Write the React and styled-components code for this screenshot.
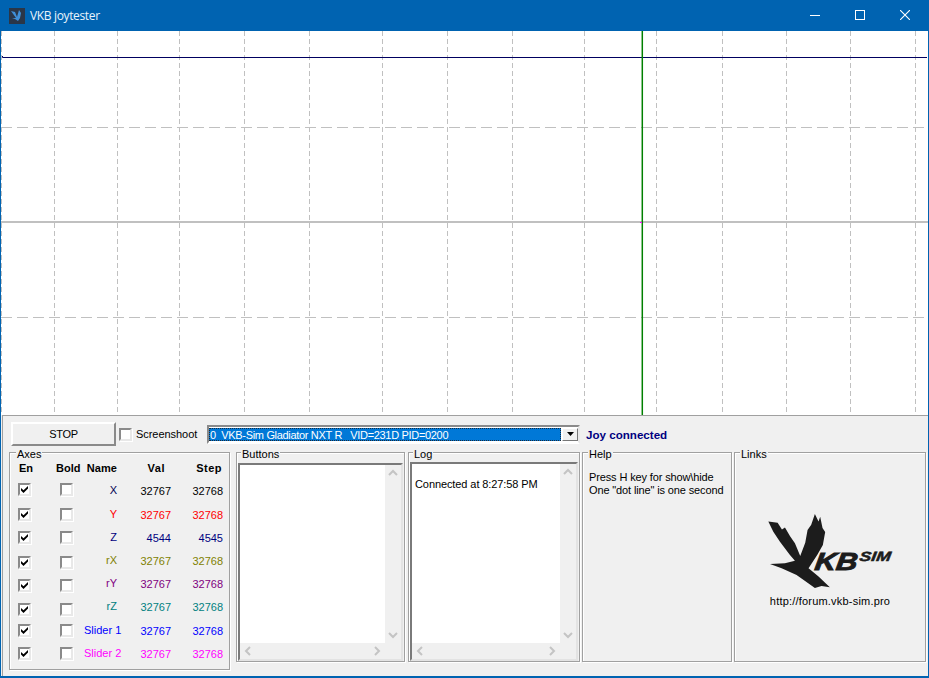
import React from "react";
import styled, { createGlobalStyle } from "styled-components";

const Global = createGlobalStyle`
  html, body { margin: 0; padding: 0; background: #f0f0f0; }
  body { font-family: "Liberation Sans", Arial, sans-serif; font-size: 11px; color: #000; }
`;

const Win = styled.div`
  width: 929px; height: 678px; box-sizing: border-box;
  display: flex; flex-direction: column; overflow: hidden;
  border: 1px solid #0063b1; border-top: 0; border-bottom-width: 2px;
  background: #f0f0f0;
`;
const TitleBar = styled.header`
  height: 31px; margin: 0 -1px; flex: none; background: #0063b1; color: #fff;
  display: flex; align-items: center; padding: 0 2px 0 9px;
`;
const TitleText = styled.span`
  font: 12px "Open Sans", "Noto Sans", sans-serif; margin-left: 5px; flex: 1; color: #eaf4fc;
  letter-spacing: -.35px;
`;
const WinBtn = styled.div`
  width: 45px; height: 31px; box-sizing: border-box; padding-bottom: 1px;
  display: flex; align-items: center; justify-content: center;
`;
const Chart = styled.svg`
  display: block; width: 927px; height: 384px; flex: none; background: #fff;
`;
const Panel = styled.section`
  flex: 1; margin-left: 1px; border-top: 1px solid #a0a0a0; border-left: 1px solid #a0a0a0;
  padding: 6px 0 0 6px; display: flex; flex-direction: column; gap: 6px; box-sizing: border-box;
`;
const TopRow = styled.div`
  height: 24px; display: flex; align-items: center; padding-left: 2px;
`;
const StopBtn = styled.button`
  width: 105px; height: 24px; box-sizing: border-box; padding: 0; font: inherit; color: #000;
  letter-spacing: -.3px;
  background: #f0f0f0; border: 2px solid; border-color: #fff #8a8a8a #8a8a8a #fff;
  outline: 0;
`;
const Box = styled.span`
  width: 13px; height: 13px; box-sizing: border-box; flex: none; display: flex;
  align-items: center; justify-content: center; background: #fff;
  border: 2px solid; border-color: #8a8a8a #e8e8e8 #e8e8e8 #8a8a8a;
  box-shadow: 1px 1px 0 #fff;
  margin-top: ${p => (p.$shift || 0) * 2}px;
  margin-left: ${p => p.$left || 0}px;
`;
const BoxCell = styled.div`
  display: flex; align-items: center; height: 100%;
`;
const ShotLabel = styled.label`
  width: 71px; margin-left: 4px; flex: none; letter-spacing: -.05px;
`;
const Combo = styled.div`
  width: 373px; height: 19px; box-sizing: border-box; background: #fff; flex: none;
  border: 2px solid; border-color: #8a8a8a #e8e8e8 #fff #8a8a8a; padding: 1px 0 1px 0;
  display: flex; align-items: stretch;
`;
const ComboValue = styled.div`
  flex: 1; background: #0078d7; color: #fff; white-space: pre; padding-left: 1px;
  outline: 1px dotted #1c2b3a; outline-offset: -1px; line-height: 14px; letter-spacing: -.32px;
`;
const ComboArrow = styled.div`
  width: 16px; margin-left: 1px; background: #f0f0f0; box-sizing: border-box;
  border: 1px solid; border-color: #fff #777 #777 #fff;
  display: flex; align-items: center; justify-content: center;
`;
const Status = styled.div`
  margin-left: 6px; font-weight: 700; color: #000080; font-size: 11.6px;
`;
const Groups = styled.div`
  display: flex; align-items: flex-start;
`;
const Group = styled.div`
  position: relative; box-sizing: border-box; flex: none;
  width: ${p => p.$w}px; height: ${p => p.$h}px; margin-left: ${p => p.$ml || 0}px;
  border: 1px solid #a0a0a0; box-shadow: 1px 1px 0 #fff, inset 1px 1px 0 #fff;
`;
const Legend = styled.span`
  position: absolute; left: ${p => p.$left}px; top: -5px; padding: 0 1px; line-height: 12px;
  background: #f0f0f0;
`;
const AxesGrid = styled.div`
  padding: 8px 6px 0 8px; display: flex; flex-direction: column;
`;
const AxisRow = styled.div`
  display: grid; grid-template-columns: 37px 29px 33px 54px 52px; align-items: center;
  height: ${p => p.$h}px; margin-bottom: ${p => p.$mb || 0}px; color: ${p => p.$color || "#000"};
  font-weight: ${p => (p.$head ? 700 : 400)};
`;
const HeadEn = styled.span` padding-left: 1px; `;
const HeadBold = styled.span` padding-left: 1px; `;
const NameCell = styled.span`
  text-align: right; white-space: nowrap; margin-top: -2px; color: ${p => p.$color || "inherit"};
`;
const NumCell = styled.span` text-align: right; `;
const HeadNum = styled.span`
  text-align: right; padding-right: ${p => p.$pr}px; letter-spacing: .5px;
`;
const HeadName = styled.span` text-align: right; letter-spacing: .1px; `;

const ListBox = styled.div`
  margin: ${p => p.$mt}px 1px 0 1px; height: ${p => p.$h}px; box-sizing: border-box;
  border: 2px solid; border-color: #7a7a7a #e3e3e3 #e3e3e3 #7a7a7a;
  display: grid; grid-template-columns: 1fr 16px; grid-template-rows: 1fr 16px;
  background: #f0f0f0;
`;
const ListBody = styled.div`
  background: #fff; padding: ${p => p.$pad || "0"}; letter-spacing: -.09px;
`;
const ScrollV = styled.div`
  display: flex; flex-direction: column; justify-content: space-between; align-items: center;
  padding: 4px 0;
`;
const ScrollH = styled.div`
  display: flex; justify-content: space-between; align-items: center; padding: 0 4px;
`;
const HelpText = styled.div`
  padding: 18px 0 0 6px; line-height: 13px; letter-spacing: -.13px;
`;
const LinksBody = styled.div`
  height: 100%; display: flex; flex-direction: column; align-items: center; padding-top: 57px; box-sizing: border-box;
`;
const LogoWrap = styled.div`
  margin-left: 3px; height: 80px; line-height: 0;
`;
const LinkText = styled.div`
  margin-top: 5px; letter-spacing: .2px;
`;

const vLines = [1, 54, 117, 179, 244, 309, 382, 447, 512, 584, 656, 722, 786, 850, 915];

const Chev = ({ dir }) => {
  const pts = { up: "1,6 5,2 9,6", down: "1,2 5,6 9,2", left: "6,1 2,5 6,9", right: "2,1 6,5 2,9" }[dir];
  const vert = dir === "up" || dir === "down";
  return (
    <svg width={vert ? 10 : 8} height={vert ? 8 : 10} viewBox={vert ? "0 0 10 8" : "0 0 8 10"}>
      <polyline points={pts} fill="none" stroke="#c4c4c4" strokeWidth="2" />
    </svg>
  );
};

const Check = () => (
  <svg width="9" height="9" viewBox="0 0 9 9">
    <path d="M1 3 L3.5 5.2 L8 1 V3.6 L3.5 8 L1 5.6 Z" fill="#000" />
  </svg>
);

const Bird = () => (
  <svg width="133" height="80" viewBox="75 30 400 240">
    <path
      fill="#1c1c1c"
      d="M85,64 L113,68 L126,88 L135,82 L150,108 L165,130 L181,168 L196,128 L203,90 L214,74 L225,42 L236,64 L241,50 L248,84 L256,96 L249,135 L232,165 L206,205 L236,230 L270,262 L245,258 L225,264 L205,250 L170,225 L125,205 L90,192 L135,190 L165,182 L150,165 L120,125 L100,95 Z"
    />
    <g fill="#1c1c1c" stroke="#1c1c1c" fontFamily="Liberation Sans" fontWeight="700" fontStyle="italic">
      <text transform="translate(222 209) skewX(-8)" fontSize="74" strokeWidth="3" textLength="128" lengthAdjust="spacingAndGlyphs">KB</text>
      <text transform="translate(358 184) skewX(-8)" fontSize="40" strokeWidth="1.5" textLength="94" lengthAdjust="spacingAndGlyphs">SIM</text>
    </g>
  </svg>
);

const axes = [
  { n: "X", v: "32767", s: "32768", c: "#000", nc: "#000050", h: 24, b: -2 },
  { n: "Y", v: "32767", s: "32768", c: "#f00", h: 23, b: 0 },
  { n: "Z", v: "4544", s: "4545", c: "#000080", h: 23, b: 0 },
  { n: "rX", v: "32767", s: "32768", c: "#808000", h: 23, b: 2 },
  { n: "rY", v: "32767", s: "32768", c: "#800080", h: 23, b: 2 },
  { n: "rZ", v: "32767", s: "32768", c: "#008080", h: 24, b: 2 },
  { n: "Slider 1", v: "32767", s: "32768", c: "#00f", h: 23, b: 0 },
  { n: "Slider 2", v: "32767", s: "32768", c: "#f0f", h: 23, b: 0 },
];

export default function App() {
  return (
    <Win>
      <Global />
      <TitleBar>
        <svg width="16" height="16" viewBox="0 0 16 16">
          <rect width="16" height="16" fill="#2a3648" />
          <path d="M2 3 L6 4 L8 9 L10 2 L12 5 L11 10 L9 13 L6 11 L3 10 L7 10 Z" fill="#3f8fd8" />
        </svg>
        <TitleText>VKB joytester</TitleText>
        <WinBtn>
          <svg width="10" height="10" viewBox="0 0 10 10"><path d="M0 5.5H10" stroke="#fff" /></svg>
        </WinBtn>
        <WinBtn>
          <svg width="10" height="10" viewBox="0 0 10 10"><rect x=".5" y=".5" width="9" height="9" fill="none" stroke="#fff" /></svg>
        </WinBtn>
        <WinBtn>
          <svg width="10" height="10" viewBox="0 0 10 10"><path d="M0 0L10 10M10 0L0 10" stroke="#fff" strokeWidth="1.1" /></svg>
        </WinBtn>
      </TitleBar>
      <Chart viewBox="1 31 927 384">
        {vLines.map(x => (
          <line key={x} x1={x + 0.5} x2={x + 0.5} y1="31" y2="415" stroke="#c0c0c0" strokeDasharray="5 3" />
        ))}
        <line x1="1" x2="928" y1="127.5" y2="127.5" stroke="#c0c0c0" strokeDasharray="11 5" />
        <line x1="1" x2="928" y1="317.5" y2="317.5" stroke="#c0c0c0" strokeDasharray="11 5" />
        <line x1="1" x2="928" y1="222" y2="222" stroke="#c0c0c0" strokeWidth="2" />
        <path d="M2.5 56 V57.5 H927" fill="none" stroke="#000060" />
        <line x1="642.3" x2="642.3" y1="31" y2="415" stroke="#008000" strokeWidth="1.5" />
        <rect x="640" y="222" width="2" height="1" fill="#f0f" />
      </Chart>
      <Panel>
        <TopRow>
          <StopBtn>STOP</StopBtn>
          <Box $left={3} />
          <ShotLabel>Screenshoot</ShotLabel>
          <Combo>
            <ComboValue>{"0  VKB-Sim Gladiator NXT R   VID=231D PID=0200"}</ComboValue>
            <ComboArrow>
              <svg width="7" height="4" viewBox="0 0 7 4"><path d="M0 0H7L3.5 4Z" fill="#000" /></svg>
            </ComboArrow>
          </Combo>
          <Status>Joy connected</Status>
        </TopRow>
        <Groups>
          <Group $w={221} $h={218}>
            <Legend $left={6}>Axes</Legend>
            <AxesGrid>
              <AxisRow $head $h={14} $mb={4}>
                <HeadEn>En</HeadEn>
                <HeadBold>Bold</HeadBold>
                <HeadName>Name</HeadName>
                <HeadNum $pr={6}>Val</HeadNum>
                <HeadNum $pr={1}>Step</HeadNum>
              </AxisRow>
              {axes.map(a => (
                <AxisRow key={a.n} $h={a.h} $color={a.c}>
                  <BoxCell><Box $shift={a.b}><Check /></Box></BoxCell>
                  <BoxCell><Box $shift={a.b} $left={5} /></BoxCell>
                  <NameCell $color={a.nc}>{a.n}</NameCell>
                  <NumCell>{a.v}</NumCell>
                  <NumCell>{a.s}</NumCell>
                </AxisRow>
              ))}
            </AxesGrid>
          </Group>
          <Group $w={169} $h={210} $ml={6}>
            <Legend $left={4}>Buttons</Legend>
            <ListBox $mt={10} $h={198}>
              <ListBody />
              <ScrollV><Chev dir="up" /><Chev dir="down" /></ScrollV>
              <ScrollH><Chev dir="left" /><Chev dir="right" /></ScrollH>
            </ListBox>
          </Group>
          <Group $w={172} $h={210} $ml={3}>
            <Legend $left={4}>Log</Legend>
            <ListBox $mt={9} $h={199}>
              <ListBody $pad="14px 0 0 3px">Connected at 8:27:58 PM</ListBody>
              <ScrollV><Chev dir="up" /><Chev dir="down" /></ScrollV>
              <ScrollH><Chev dir="left" /><Chev dir="right" /></ScrollH>
            </ListBox>
          </Group>
          <Group $w={150} $h={210} $ml={2}>
            <Legend $left={5}>Help</Legend>
            <HelpText>
              Press H key for show\hide<br />
              One "dot line" is one second
            </HelpText>
          </Group>
          <Group $w={192} $h={210} $ml={2}>
            <Legend $left={5}>Links</Legend>
            <LinksBody>
              <LogoWrap><Bird /></LogoWrap>
              <LinkText>http://forum.vkb-sim.pro</LinkText>
            </LinksBody>
          </Group>
        </Groups>
      </Panel>
    </Win>
  );
}
